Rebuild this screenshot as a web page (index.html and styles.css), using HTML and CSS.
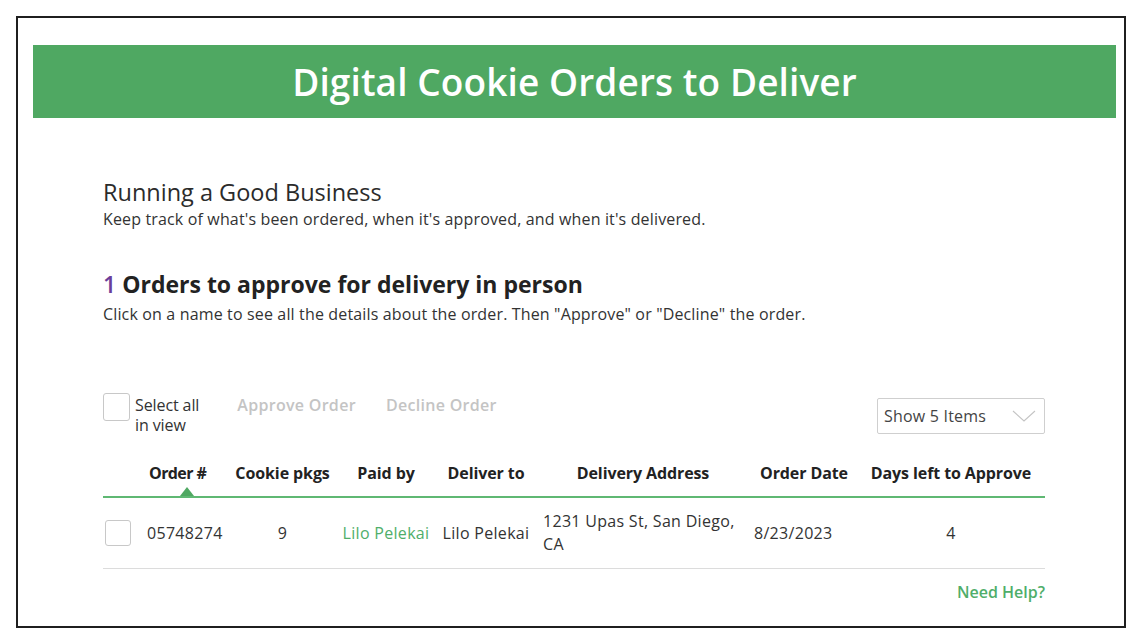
FILE: index.html
```html
<!DOCTYPE html>
<html lang="en">
<head>
<meta charset="utf-8">
<title>Digital Cookie Orders to Deliver</title>
<link rel="stylesheet" href="styles.css">
</head>
<body>
<div class="frame">
  <header class="banner">Digital Cookie Orders to Deliver</header>
  <main class="content">
    <h1 class="intro-title">Running a Good Business</h1>
    <p class="intro-text">Keep track of what's been ordered, when it's approved, and when it's delivered.</p>

    <h2 class="section-title"><span class="count">1</span> Orders to approve for delivery in person</h2>
    <p class="section-text">Click on a name to see all the details about the order. Then "Approve" or "Decline" the order.</p>

    <div class="toolbar">
      <label class="select-all">
        <span class="checkbox"></span>
        <span class="select-all-text">Select all<br>in view</span>
      </label>
      <span class="action">Approve Order</span>
      <span class="action">Decline Order</span>
      <div class="spacer"></div>
      <div class="dropdown">
        <span>Show 5 Items</span>
        <svg class="chevron" width="24" height="12" viewBox="0 0 24 12"><path d="M1 1 L12 11 L23 1" fill="none" stroke="#c4c4c4" stroke-width="1.1"/></svg>
      </div>
    </div>

    <div class="table">
      <div class="row head">
        <div class="cell"></div>
        <div class="cell order-h">Order #<span class="sort-arrow"></span></div>
        <div class="cell c">Cookie pkgs</div>
        <div class="cell c">Paid by</div>
        <div class="cell c">Deliver to</div>
        <div class="cell c">Delivery Address</div>
        <div class="cell c">Order Date</div>
        <div class="cell c">Days left to Approve</div>
      </div>
      <div class="row data">
        <div class="cell"><span class="checkbox small"></span></div>
        <div class="cell order-d">05748274</div>
        <div class="cell c">9</div>
        <div class="cell c link">Lilo Pelekai</div>
        <div class="cell c">Lilo Pelekai</div>
        <div class="cell addr">1231 Upas St, San Diego,<br>CA</div>
        <div class="cell date">8/23/2023</div>
        <div class="cell c">4</div>
      </div>
    </div>

    <div class="help"><a href="#">Need Help?</a></div>
  </main>
</div>
</body>
</html>
```

FILE: styles.css
```css
* { box-sizing: border-box; }

html, body {
  margin: 0;
  padding: 0;
  background: #ffffff;
}

body {
  font-family: "Open Sans", "Noto Sans", "Liberation Sans", sans-serif;
  color: #333333;
}

.frame {
  margin: 16px 0 0 16px;
  width: 1110px;
  height: 612px;
  border: 2px solid #1f1f1f;
  overflow: hidden;
}

.banner {
  margin: 27px 8px 0 15px;
  height: 73px;
  background: #4fa862;
  color: #ffffff;
  font-size: 37px;
  font-weight: 600;
  display: flex;
  align-items: center;
  justify-content: center;
  letter-spacing: 0.1px;
}

.content {
  padding: 0 79px 0 85px;
}

.intro-title {
  margin: 59px 0 0;
  font-size: 23.5px;
  line-height: 30px;
  font-weight: 400;
  color: #2b2b2b;
}

.intro-text {
  margin: 2px 0 0;
  font-size: 16px;
  line-height: 20px;
  letter-spacing: 0.15px;
  color: #333;
}

.section-title {
  margin: 40px 0 0;
  font-size: 23px;
  line-height: 30px;
  font-weight: 700;
  color: #222;
}

.count {
  color: #6b3d9a;
  font-weight: 600;
}

.section-text {
  margin: 5px 0 0;
  font-size: 16px;
  line-height: 20px;
  letter-spacing: 0.15px;
  color: #333;
}

.toolbar {
  margin-top: 69px;
  display: flex;
  align-items: flex-start;
}

.select-all {
  display: flex;
  align-items: flex-start;
  gap: 5px;
}

.checkbox {
  display: block;
  width: 27px;
  height: 28px;
  border: 1.5px solid #c8c8c8;
  border-radius: 3px;
  background: #fff;
}

.checkbox.small {
  width: 26px;
  height: 26px;
  margin-left: 2px;
}

.select-all-text {
  padding-top: 2px;
  font-size: 16px;
  line-height: 20px;
  color: #333;
  letter-spacing: -0.1px;
}

.action {
  margin-top: 2px;
  font-size: 16px;
  line-height: 20px;
  font-weight: 600;
  letter-spacing: 0.3px;
  color: #c4c4c4;
}

.select-all + .action { margin-left: 38px; }
.action + .action { margin-left: 30px; }

.spacer { flex: 1; }

.dropdown {
  margin-top: 5px;
  width: 168px;
  height: 36px;
  border: 1.5px solid #cfcfcf;
  border-radius: 2px;
  display: flex;
  align-items: center;
  justify-content: space-between;
  padding: 0 8px 0 6px;
  font-size: 16px;
  color: #444;
  letter-spacing: 0.2px;
}

.chevron { display: block; }

.table {
  margin-top: 20px;
}

.row {
  display: grid;
  grid-template-columns: 37px 89px 107px 100px 100px 214px 108px 186px;
  align-items: center;
}

.row.head {
  padding: 8px 0 13px;
  border-bottom: 2px solid #5fb873;
  font-size: 16px;
  line-height: 20px;
  font-weight: 700;
  color: #222;
  letter-spacing: -0.1px;
}

.row.data {
  height: 71px;
  border-bottom: 1.5px solid #dcdcdc;
  font-size: 16px;
  line-height: 23px;
  letter-spacing: 0.3px;
  color: #333;
}

.cell { white-space: nowrap; }
.cell.c { text-align: center; }

.order-h {
  position: relative;
  padding-left: 9px;
  letter-spacing: -0.6px;
}

.sort-arrow {
  position: absolute;
  left: 40px;
  bottom: -13px;
  width: 0;
  height: 0;
  border-left: 7px solid transparent;
  border-right: 7px solid transparent;
  border-bottom: 9px solid #4fa862;
}

.order-d {
  padding-left: 7px;
}

.link { color: #4fae6a; }

.addr {
  padding-left: 7px;
}

.date {
  padding-left: 4px;
}

.help {
  margin-top: 13px;
  text-align: right;
  font-size: 16px;
  line-height: 20px;
}

.help a {
  color: #4fae6a;
  text-decoration: none;
  font-weight: 600;
}
```
